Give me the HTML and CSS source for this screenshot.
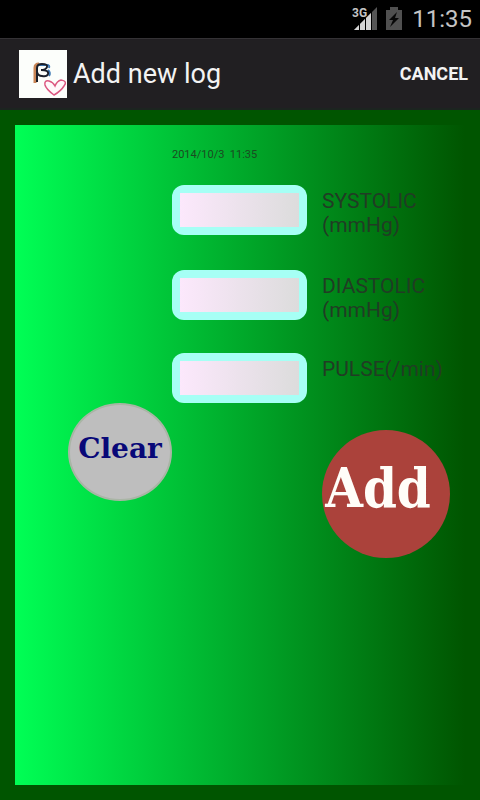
FILE: index.html
```html
<!DOCTYPE html>
<html lang="en">
<head>
<meta charset="utf-8">
<meta name="viewport" content="width=device-width, initial-scale=1">
<title>Add new log</title>
<link rel="stylesheet" href="styles.css">
</head>
<body>
<div class="status-bar">
  <svg class="signal" width="26" height="26" viewBox="0 0 26 26" role="img" aria-label="3G signal">
    <path d="M2 24 25 1V24Z" fill="#555"/>
    <path d="M2 24 19 7V24Z" fill="#d5d5d5"/>
    <path d="M7.500 17V24M13.500 11V24M19.500 6V24" stroke="#000" stroke-width="1"/>
    <path d="M0 0H15V9L13 12H0Z" fill="#000"/>
    <text class="network" x="0" y="11">3G</text>
  </svg>
  <svg class="battery" width="16" height="24" viewBox="0 0 16 24" role="img" aria-label="Battery charging">
    <path d="M4 0H12V3H16V23H0V3H4Z" fill="#505050"/>
    <path d="M11 5 3 13H7L4 20 13 11H9Z" fill="#080808"/>
  </svg>
  <span class="clock">11:35</span>
</div>
<header class="action-bar">
  <svg class="app-icon" width="48" height="48" viewBox="0 0 48 48" aria-hidden="true">
    <path d="M0 0H48V48H0Z" fill="#fcfefb"/>
    <g fill="none">
      <path d="M16 33V18Q16 14 20 14" stroke="#c98556" stroke-width="3"/>
      <path d="M20 15H28Q31 15 30 18M29 20Q32 23 30 26" stroke="#3c78b4" stroke-width="2"/>
      <path d="M18 32V18Q18 14 23 14Q29 14 28 17Q27 20 22 20Q30 20 29 24Q28 27 23 26Q19 26 18 22" stroke="#1b202b" stroke-width="2"/>
    </g>
    <path d="M35 45Q27 39 26 35Q25 30 30 31Q34 32 36 36Q38 31 42 30Q49 31 45 36Q42 41 35 45Z" fill="#fff8fa" stroke="#dc5780" stroke-width="1.500"/>
  </svg>
  <h1 class="title">Add new log</h1>
  <button class="cancel" type="button">CANCEL</button>
</header>
<main class="page">
  <form class="log-form">
    <time class="stamp" datetime="2014-10-03T11:35">2014/10/3  11:35</time>
    <input class="field" id="systolic" type="text" inputmode="numeric">
    <label class="label" for="systolic">SYSTOLIC (mmHg)</label>
    <input class="field" id="diastolic" type="text" inputmode="numeric">
    <label class="label" for="diastolic">DIASTOLIC (mmHg)</label>
    <input class="field" id="pulse" type="text" inputmode="numeric">
    <label class="label" for="pulse">PULSE(/min)</label>
    <button class="round clear" type="reset">Clear</button>
    <button class="round add" type="submit">Add</button>
  </form>
</main>
</body>
</html>
```
FILE: styles.css
```css
* {
  box-sizing: border-box;
}

body {
  margin: 0;
  min-height: 100vh;
  display: flex;
  flex-direction: column;
  background: #005500;
  font-family: Roboto, "Liberation Sans", sans-serif;
}

.status-bar {
  display: flex;
  align-items: center;
  justify-content: flex-end;
  height: 38px;
  padding: 0 8px;
  background: #000;
  color: #c4c4c4;
}

.signal {
  margin-right: 8px;
}

.network {
  font-size: 12px;
  font-weight: 700;
  fill: #c4c4c4;
}

.battery {
  margin-right: 10px;
}

.clock {
  font-size: 24px;
}

.action-bar {
  display: flex;
  align-items: center;
  height: 72px;
  padding: 0 12px 0 19px;
  background: #211f22;
  border-top: 1px solid #343235;
  border-bottom: 2px solid #1c2420;
  color: #f3f3f3;
}

.title {
  flex: 1;
  margin: 0 0 0 6px;
  font-size: 27px;
  font-weight: 400;
}

.cancel {
  padding: 0;
  border: 0;
  background: none;
  color: inherit;
  font: 700 18px Roboto, "Liberation Sans", sans-serif;
}

.page {
  flex: 1;
  display: flex;
  padding: 15px;
}

.log-form {
  flex: 1;
  display: grid;
  grid-template-columns: 104px 135px 1fr;
  grid-template-rows: 60px 85px 83px 50px auto;
  align-content: start;
  align-items: start;
  padding-left: 53px;
  background: linear-gradient(to right, #00ff55, #005500);
}

.stamp {
  grid-column: 2 / 4;
  padding-top: 23px;
  color: #1c4a22;
  font-size: 11px;
  line-height: 13px;
  white-space: pre;
}

.field {
  grid-column: 2;
  width: 100%;
  height: 50px;
  padding: 8px 12px;
  border: 0;
  border-radius: 12px;
  background: #a6fff5 linear-gradient(to right, #fce8fc, #dcdcdc) center / calc(100% - 16px) calc(100% - 16px) no-repeat;
  font-size: 20px;
}

.label {
  grid-column: 3;
  padding: 4px 0 0 15px;
  color: #203c24;
  font-size: 21px;
  line-height: 24px;
}

.round {
  padding: 0;
  border-radius: 50%;
  font-weight: 700;
}

.clear {
  grid-column: 1;
  width: 104px;
  height: 98px;
  padding-bottom: 8px;
  border: 2px solid #a9b5a5;
  background: #bebebe;
  color: #080878;
  font-family: "DejaVu Serif", serif;
  font-size: 28px;
}

.add {
  grid-column: 3;
  width: 128px;
  height: 128px;
  margin: 27px 0 0 15px;
  padding: 0 16px 12px 0;
  border: 0;
  background: #ab423b;
  color: #fffdf8;
  font-family: "DejaVu Serif Condensed", "DejaVu Serif", serif;
  font-size: 54px;
}
```
